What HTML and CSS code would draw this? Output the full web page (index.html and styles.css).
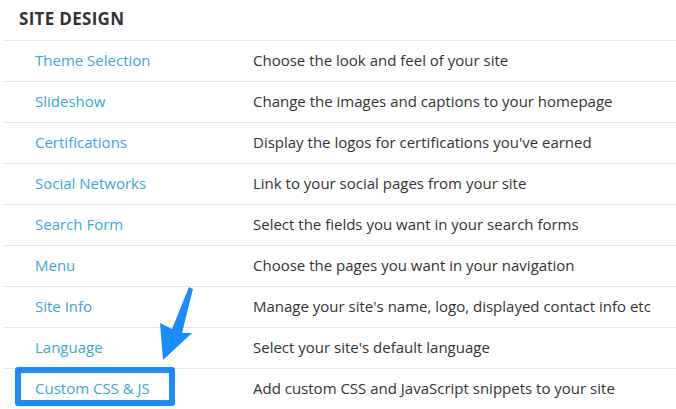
FILE: index.html
```html
<!DOCTYPE html>
<html>
<head>
  <meta charset="UTF-8">
  <title>Site Design</title>
  <link rel="stylesheet" href="styles.css">
</head>
<body>
  <div class="panel">
    <h2 class="panel-title">SITE DESIGN</h2>
    <ul class="settings">
      <li class="row">
        <a class="row-link" href="#">Theme Selection</a>
        <span class="row-desc">Choose the look and feel of your site</span>
      </li>
      <li class="row">
        <a class="row-link" href="#">Slideshow</a>
        <span class="row-desc">Change the images and captions to your homepage</span>
      </li>
      <li class="row">
        <a class="row-link" href="#">Certifications</a>
        <span class="row-desc">Display the logos for certifications you've earned</span>
      </li>
      <li class="row">
        <a class="row-link" href="#">Social Networks</a>
        <span class="row-desc">Link to your social pages from your site</span>
      </li>
      <li class="row">
        <a class="row-link" href="#">Search Form</a>
        <span class="row-desc">Select the fields you want in your search forms</span>
      </li>
      <li class="row">
        <a class="row-link" href="#">Menu</a>
        <span class="row-desc">Choose the pages you want in your navigation</span>
      </li>
      <li class="row">
        <a class="row-link" href="#">Site Info</a>
        <span class="row-desc">Manage your site's name, logo, displayed contact info etc</span>
      </li>
      <li class="row">
        <a class="row-link" href="#">Language</a>
        <span class="row-desc">Select your site's default language</span>
      </li>
      <li class="row">
        <a class="row-link highlight" href="#">Custom CSS &amp; JS</a>
        <span class="row-desc">Add custom CSS and JavaScript snippets to your site</span>
      </li>
    </ul>

    <!-- annotation arrow -->
    <svg class="arrow" width="40" height="80" viewBox="0 0 40 80">
      <polygon points="29,0 33,2 22,46 32,46 3,73 0,36 12,42" fill="#1a8cff"/>
    </svg>
  </div>
</body>
</html>
```

FILE: styles.css
```css
/* page */
body {
  margin: 0;
  background: #fff;
  font-family: "Open Sans", "DejaVu Sans", sans-serif;
  color: #333;
}

.panel {
  position: relative;
  width: 676px;
  height: 409px;
  overflow: hidden;
  padding-left: 4px;
  box-sizing: border-box;
}

.panel-title {
  margin: 0;
  height: 40px;
  padding: 7px 0 0 15px;
  box-sizing: border-box;
  font-size: 17px;
  font-weight: bold;
  letter-spacing: 0.3px;
  color: #333;
}

/* settings list */
.settings {
  list-style: none;
  margin: 0;
  padding: 0;
}

.row {
  display: flex;
  align-items: center;
  height: 41px;
  padding-bottom: 3px;
  border-top: 1px solid #e6e6e6;
  box-sizing: border-box;
  font-size: 15px;
}

.row-link {
  position: relative;
  width: 218px;
  margin-left: 31px;
  color: #3ca6d8;
  text-decoration: none;
}

.row-desc {
  color: #333;
}

/* annotation box round the last link */
.highlight::after {
  content: "";
  position: absolute;
  left: -20px;
  top: -11px;
  width: 160px;
  height: 39px;
  border: 6px solid #1a8cff;
  border-radius: 3px;
  box-sizing: border-box;
}

.arrow {
  position: absolute;
  left: 160px;
  top: 287px;
}
```
